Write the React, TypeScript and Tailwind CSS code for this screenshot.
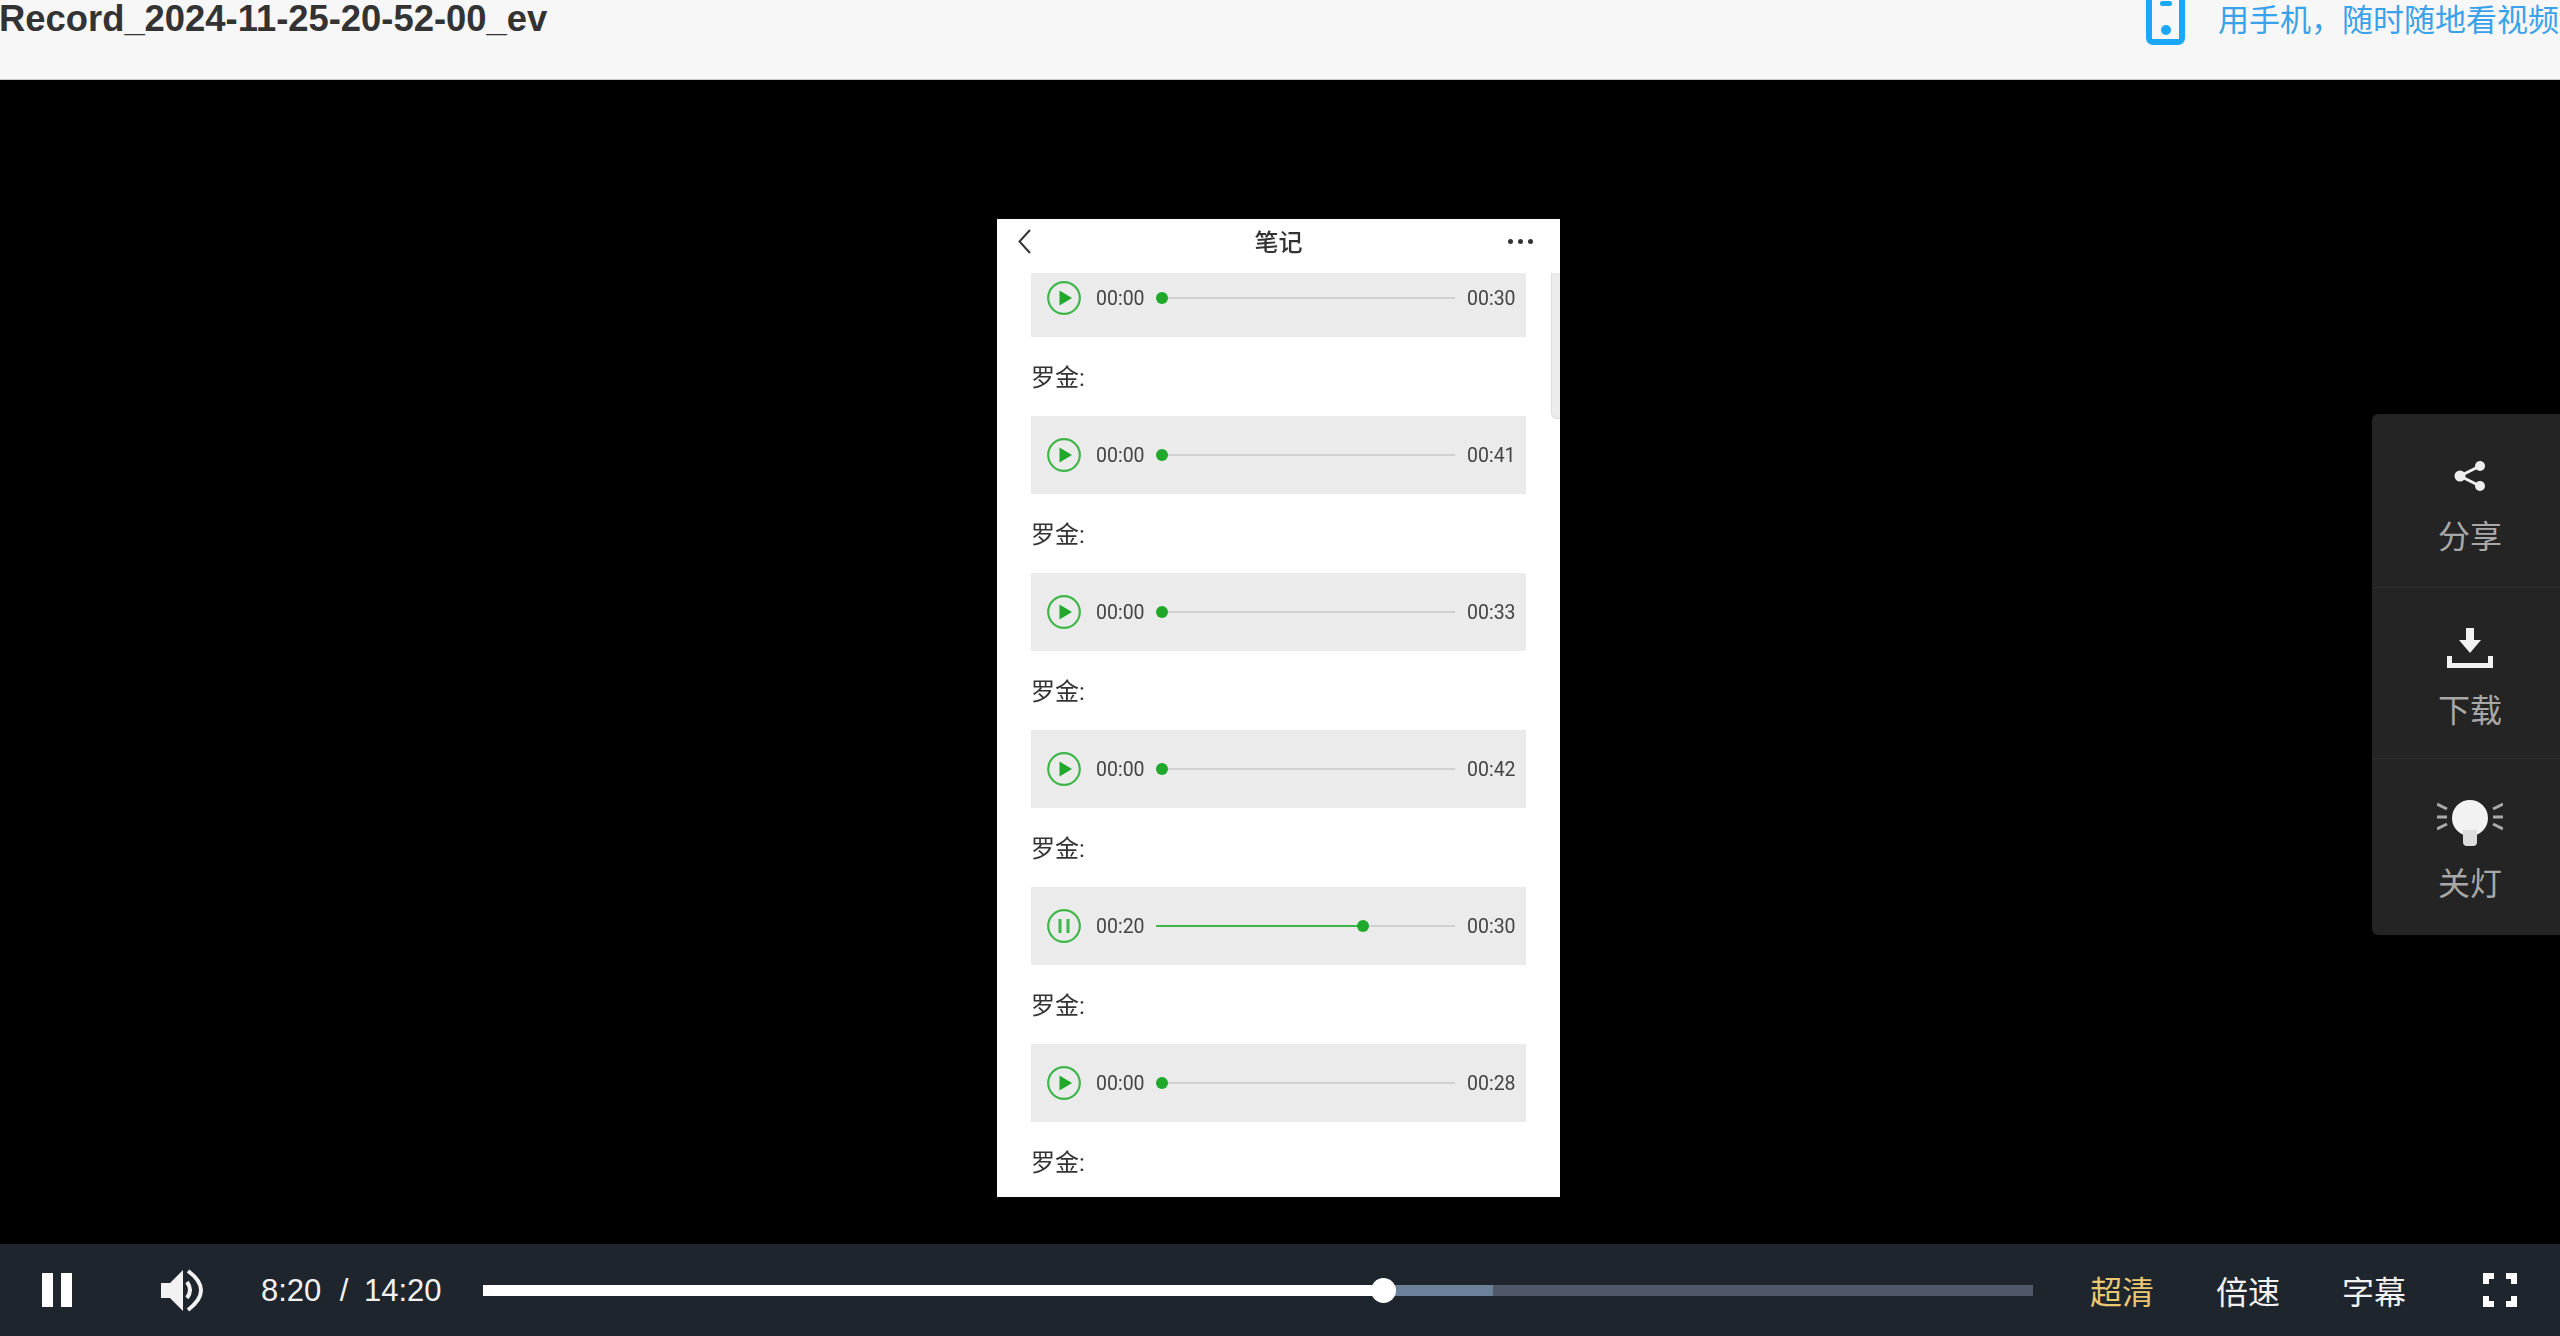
const noteRows = [
  { start: '00:00', end: '00:30', progress: 0, playing: false },
  { start: '00:00', end: '00:41', progress: 0, playing: false },
  { start: '00:00', end: '00:33', progress: 0, playing: false },
  { start: '00:00', end: '00:42', progress: 0, playing: false },
  { start: '00:20', end: '00:30', progress: 207, playing: true },
  { start: '00:00', end: '00:28', progress: 0, playing: false },
];

function PhoneIcon() {
  return (
    <svg width="39" height="60" viewBox="0 0 39 60" className="-mt-[15px] shrink-0">
      <rect x="3" y="3" width="33" height="54" rx="4" fill="none" stroke="#1aa7f7" strokeWidth="6" />
      <rect x="14" y="16" width="12" height="5" rx="2.5" fill="#1aa7f7" />
      <circle cx="20" cy="45" r="5" fill="#1aa7f7" />
    </svg>
  );
}

function RoundButton({ playing }: { playing: boolean }) {
  return (
    <svg width="34" height="34" viewBox="0 0 34 34" className="shrink-0">
      <circle cx="17" cy="17" r="15.8" fill="none" stroke="#3fb64a" strokeWidth="2.2" />
      {playing ? (
        <g fill="#3fb64a">
          <rect x="11.5" y="10" width="3" height="14" />
          <rect x="19.5" y="10" width="3" height="14" />
        </g>
      ) : (
        <path d="M12.5 9.5 L25 17 L12.5 24.5 Z" fill="#1fa82a" />
      )}
    </svg>
  );
}

function NoteRow({ row }: { row: (typeof noteRows)[number] }) {
  return (
    <div className="h-[78px] bg-[#ebebeb] flex items-center pl-[16px] pr-[11px] text-[19.5px] text-[#444] font-['Roboto',sans-serif]">
      <RoundButton playing={row.playing} />
      <span className="ml-[15px] mt-[2px] w-[48px] shrink-0">{row.start}</span>
      <div className="relative flex-1 ml-[12px] mr-[12px] h-[2px] bg-[#d0d0d0]">
        {row.progress > 0 && (
          <div className="h-full bg-[#3fb64a]" style={{ width: row.progress }} />
        )}
        <div
          className="absolute top-[-5px] w-[12px] h-[12px] rounded-full bg-[#1fa82a]"
          style={{ left: row.progress > 0 ? row.progress - 6 : 0 }}
        />
      </div>
      <span className="mt-[2px] w-[48px] shrink-0">{row.end}</span>
    </div>
  );
}

function PhoneShot() {
  return (
    <div className="relative w-[563px] h-[978px] bg-white flex flex-col overflow-hidden blur-[0.4px]">
      <div className="h-[54px] shrink-0 grid grid-cols-[1fr_auto_1fr] items-center px-[21px] pb-[10px] bg-white relative z-10">
        <svg width="13" height="25" viewBox="0 0 13 25">
          <path d="M12 1 L1.5 12.5 L12 24" fill="none" stroke="#333" strokeWidth="2" />
        </svg>
        <span className="text-[24px] leading-[32px] font-medium text-[#333] font-['Noto_Sans_CJK_SC',sans-serif]">笔记</span>
        <div className="flex justify-end gap-[5px] pr-[6px]">
          <span className="w-[5px] h-[5px] rounded-full bg-[#333]" />
          <span className="w-[5px] h-[5px] rounded-full bg-[#333]" />
          <span className="w-[5px] h-[5px] rounded-full bg-[#333]" />
        </div>
      </div>
      <div className="flex-1 overflow-hidden px-[34px]">
        <div className="-mt-[14px] w-[495px]">
          {noteRows.map((row, i) => (
            <div key={i}>
              <NoteRow row={row} />
              <div className="h-[79px] flex items-center pt-[3px] text-[24px] text-[#333] font-['Roboto','Noto_Sans_CJK_SC',sans-serif]">
                罗金:
              </div>
            </div>
          ))}
        </div>
      </div>
      <div className="absolute right-0 top-[50px] w-[9px] h-[150px] rounded-l-[6px] bg-[#ececec] border border-r-0 border-[#dcdcdc]" />
    </div>
  );
}

function SidePanel() {
  return (
    <div className="absolute right-0 top-[334px] w-[188px] h-[521px] bg-[#242424] rounded-l-[6px] flex flex-col text-[32px] leading-[40px] text-[#a8a8a8] font-['Noto_Sans_CJK_SC',sans-serif]">
      <div className="h-[174px] shrink-0 border-b border-[#2e2e2e] flex flex-col items-center pl-[8px] pt-[46px]">
        <svg width="34" height="32" viewBox="0 0 34 32">
          <path d="M27 6 L7 16 L27 26" fill="none" stroke="#eee" strokeWidth="3" />
          <circle cx="27" cy="6" r="5" fill="#eee" />
          <circle cx="7" cy="16" r="5.5" fill="#eee" />
          <circle cx="27" cy="26" r="5" fill="#eee" />
        </svg>
        <span className="mt-[22px]">分享</span>
      </div>
      <div className="h-[171px] shrink-0 border-b border-[#2e2e2e] flex flex-col items-center pl-[8px] pt-[40px]">
        <svg width="46" height="40" viewBox="0 0 46 40">
          <path d="M19 0 H27 V12 H34 L23 25 L12 12 H19 Z" fill="#f2f2f2" />
          <path d="M2.5 28 V37.5 H43.5 V28" fill="none" stroke="#f2f2f2" strokeWidth="5" />
        </svg>
        <span className="mt-[20px]">下载</span>
      </div>
      <div className="flex-1 flex flex-col items-center pl-[8px] pt-[41px]">
        <svg width="66" height="46" viewBox="0 0 66 46">
          <circle cx="33" cy="18" r="18" fill="#f2f2f2" />
          <path d="M26 30 H40 V42 Q40 46 36 46 H30 Q26 46 26 42 Z" fill="#dcdcdc" />
          <g stroke="#aaa" strokeWidth="3">
            <path d="M0 4 L10 9" />
            <path d="M0 17 H10" />
            <path d="M0 29 L10 24" />
            <path d="M66 4 L56 9" />
            <path d="M66 17 H56" />
            <path d="M66 29 L56 24" />
          </g>
        </svg>
        <span className="mt-[15px]">关灯</span>
      </div>
    </div>
  );
}

function ControlBar() {
  return (
    <div className="h-[92px] shrink-0 bg-[#1f252d] flex items-center text-[#f2f2f2] text-[31px] font-['Liberation_Sans','Noto_Sans_CJK_SC',sans-serif]">
      <div className="ml-[42px] flex gap-[8px] h-[34px] w-[30px]">
        <span className="w-[11px] bg-white" />
        <span className="w-[11px] bg-white" />
      </div>
      <svg width="45" height="43" viewBox="0 0 45 43" className="ml-[88px] shrink-0">
        <path d="M1 14 H10 L23 1 V42 L10 29 H1 Z" fill="#f2f2f2" />
        <path d="M27 13 Q33 21 27 29" fill="none" stroke="#f2f2f2" strokeWidth="4" />
        <path d="M28 2 Q54 21 28 41" fill="none" stroke="#f2f2f2" strokeWidth="4" />
      </svg>
      <span className="ml-[56px] mt-[2px] w-[60px] shrink-0">8:20</span>
      <span className="ml-[7px] mt-[2px] w-[32px] text-center shrink-0">/</span>
      <span className="ml-[4px] mt-[2px] w-[79px] shrink-0">14:20</span>
      <div className="ml-[40px] w-[1550px] shrink-0 h-[11px] bg-[#4e5866] relative">
        <div className="absolute left-0 top-0 h-full w-[1010px] bg-[#6d8099]" />
        <div className="absolute left-0 top-0 h-full w-[901px] bg-white" />
        <div className="absolute left-[888px] top-[-7px] w-[25px] h-[25px] rounded-full bg-white" />
      </div>
      <span className="ml-[57px] text-[32px] text-[#e8c873] font-['Noto_Sans_CJK_SC',sans-serif] w-[126px] shrink-0">超清</span>
      <span className="text-[32px] font-['Noto_Sans_CJK_SC',sans-serif] w-[126px] shrink-0">倍速</span>
      <span className="text-[32px] font-['Noto_Sans_CJK_SC',sans-serif] w-[141px] shrink-0">字幕</span>
      <svg width="34" height="34" viewBox="0 0 34 34" className="shrink-0">
        <path
          d="M3 11 V3 H11 M23 3 H31 V11 M31 23 V31 H23 M11 31 H3 V23"
          fill="none"
          stroke="#fff"
          strokeWidth="6"
        />
      </svg>
    </div>
  );
}

export default function App() {
  return (
    <div className="w-[2560px] h-[1336px] flex flex-col overflow-hidden bg-black">
      <div className="h-[80px] shrink-0 bg-[#f7f7f7] border-b border-[#c8c8c8] overflow-hidden">
        <div className="h-[36px] flex items-start justify-between">
          <span className="-ml-[1px] mt-[1px] text-[36.4px] leading-[36px] font-bold text-[#333] font-['Liberation_Sans',sans-serif]">
            Record_2024-11-25-20-52-00_ev
          </span>
          <div className="w-[414px] shrink-0 flex items-start gap-[33px] whitespace-nowrap">
            <PhoneIcon />
            <span className="text-[31px] leading-[36px] text-[#3aa2ea] font-['Noto_Sans_CJK_SC',sans-serif]">
              用手机，随时随地看视频
            </span>
          </div>
        </div>
      </div>
      <div className="relative flex-1 pl-[997px] pt-[139px]">
        <PhoneShot />
        <SidePanel />
      </div>
      <ControlBar />
    </div>
  );
}
